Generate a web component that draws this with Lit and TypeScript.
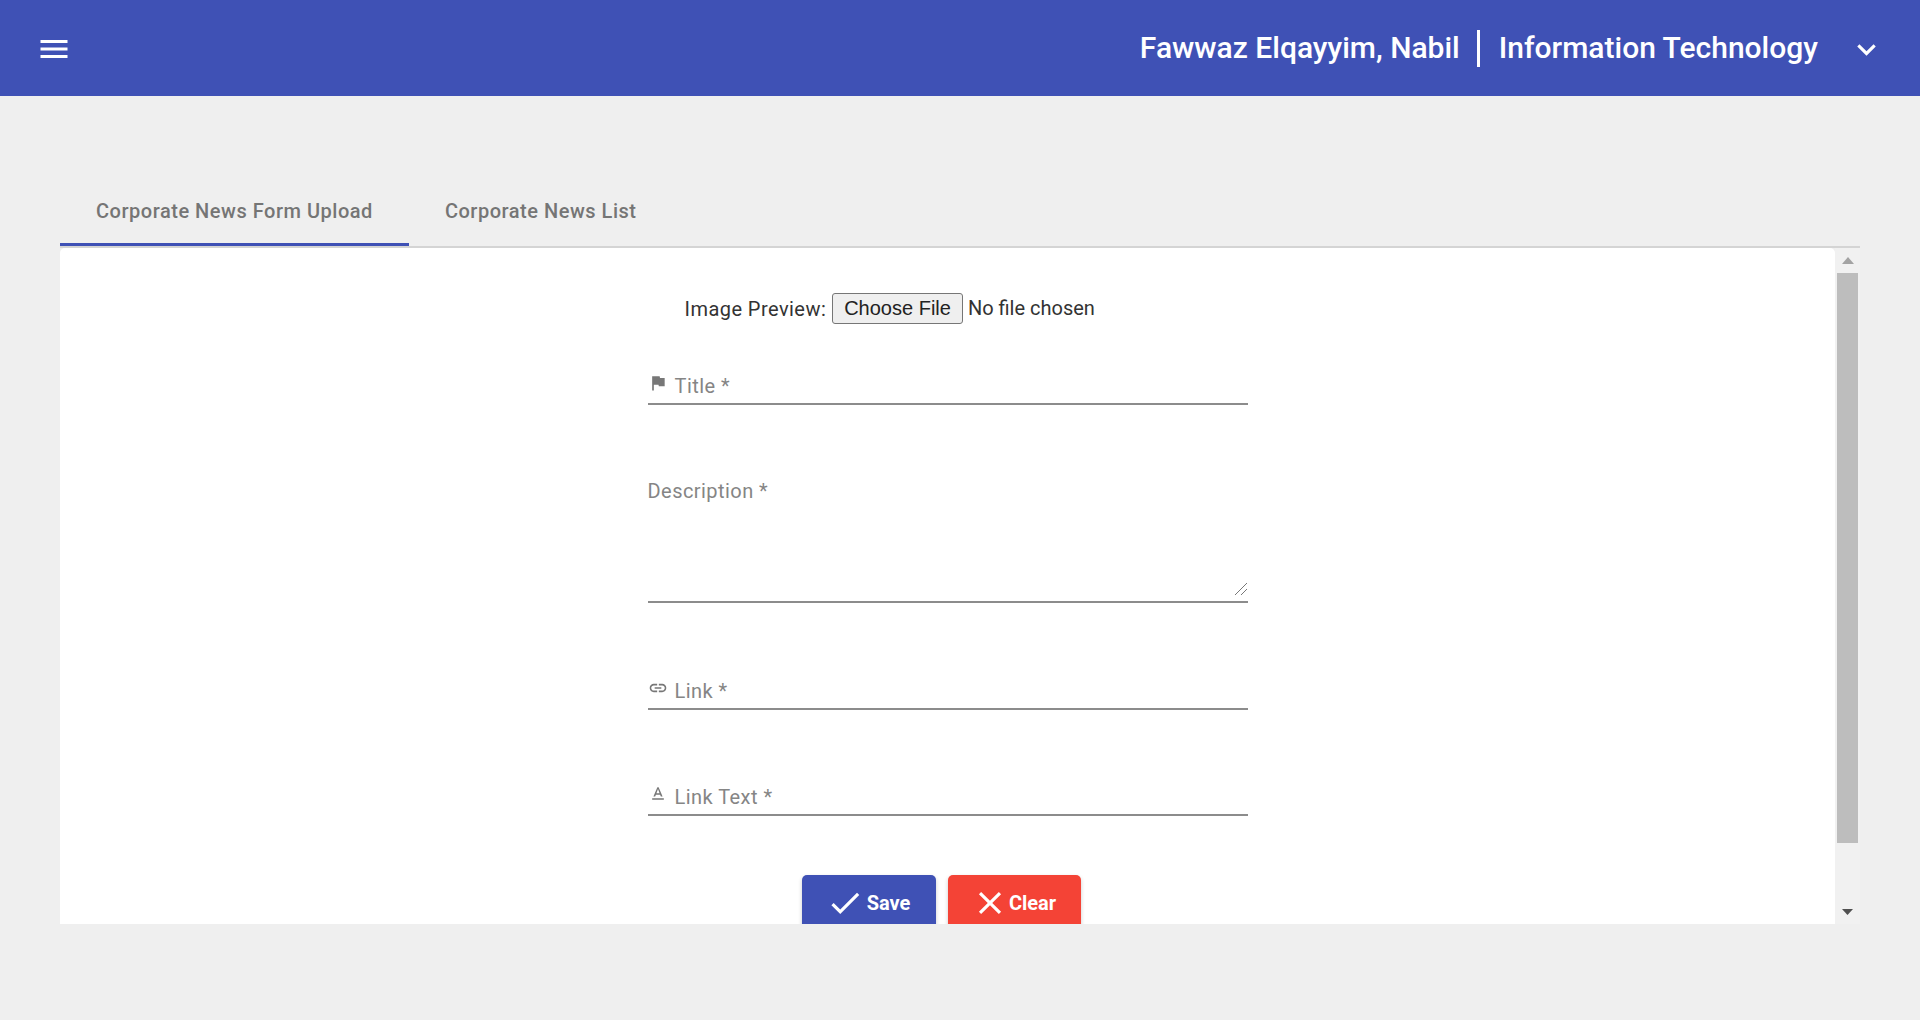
import { LitElement, html, css, svg } from "lit"
import { customElement } from "lit/decorators.js"

const icon = (d: unknown, size: number) => html`<svg class="icon" width=${size} height=${size} viewBox="0 0 24 24" fill="currentColor">${d}</svg>`

const MENU = svg`<path d="M3 18h18v-2H3v2zm0-5h18v-2H3v2zm0-7v2h18V6H3z"/>`
const CHEVRON = svg`<path d="M16.59 8.59L12 13.17 7.41 8.59 6 10l6 6 6-6z"/>`
const FLAG = svg`<path d="M14.4 6L14 4H5v17h2v-7h5.6l.4 2h7V6z"/>`
const LINK = svg`<path d="M3.9 12c0-1.71 1.39-3.1 3.1-3.1h4V7H7c-2.76 0-5 2.24-5 5s2.24 5 5 5h4v-1.9H7c-1.71 0-3.1-1.39-3.1-3.1zM8 13h8v-2H8v2zm9-6h-4v1.9h4c1.71 0 3.1 1.39 3.1 3.1s-1.39 3.1-3.1 3.1h-4V17h4c2.76 0 5-2.24 5-5s-2.24-5-5-5z"/>`
const TEXT_FORMAT = svg`<path d="M5 17v2h14v-2H5zm4.5-4.2h5l.9 2.2h2.1L12.75 4h-1.5L6.5 15h2.1l.9-2.2zM12 5.98L13.87 11h-3.74L12 5.98z"/>`
const CHECK = svg`<path d="M9 16.17L4.83 12l-1.42 1.41L9 19 21 7l-1.41-1.41z"/>`
const CLOSE = svg`<path d="M19 6.41L17.59 5 12 10.59 6.41 5 5 6.41 10.59 12 5 17.59 6.41 19 12 13.41 17.59 19 19 17.59 13.41 12z"/>`

@customElement("app-root")
export class AppRoot extends LitElement {
	static styles = css`
:host {
	display: block;
	height: 1020px;
	background: #efefef;
	font-family: Roboto, "Liberation Sans", sans-serif;
	overflow: hidden;
}
.icon {
	display: block;
	flex: none;
}

/* header */
.topbar {
	height: 96px;
	background: #3f51b5;
	color: #fff;
	display: flex;
	align-items: center;
	justify-content: space-between;
	padding: 1px 35px 0 36px;
	box-sizing: border-box;
}
.user {
	display: flex;
	align-items: center;
	font-size: 30px;
	font-weight: 500;
}
.user .name {
	margin-bottom: 2px;
}
.user .sep {
	width: 3px;
	height: 37px;
	background: #fff;
	margin: 0 19px 0 17px;
}
.user .icon {
	margin-left: 30px;
	margin-top: 1px;
}

/* tabs */
.main {
	padding: 80px 60px 0;
}
.tabs {
	display: flex;
	height: 72px;
	border-bottom: 2px solid #d4d4d4;
	box-sizing: border-box;
}
.tab {
	height: 70px;
	padding: 3px 36px 0 36px;
	box-sizing: border-box;
	font-size: 20px;
	font-weight: 500;
	letter-spacing: 0.52px;
	color: #757575;
	display: flex;
	align-items: center;
	border-bottom: 3px solid transparent;
}
.tab.active {
	border-bottom-color: #3f51b5;
}

/* panel */
.panel {
	display: flex;
	height: 676px;
}
.sheet {
	flex: 1;
	background: #fff;
	border-radius: 5px 5px 0 0;
	padding-top: 45px;
	box-sizing: border-box;
	overflow: hidden;
}
.form {
	width: 600px;
	margin: 0 auto;
}

/* scrollbar */
.scrollbar {
	flex: none;
	width: 25px;
	background: #f1f1f1;
	display: flex;
	flex-direction: column;
}
.scrollbar .step {
	flex: none;
	height: 25px;
	display: flex;
	align-items: center;
	justify-content: center;
}
.scrollbar .thumb {
	flex: none;
	height: 570px;
	margin: 0 2px;
	background: #bdbdbd;
}
.scrollbar .rest {
	flex: 1;
}

/* image row */
.preview {
	display: flex;
	align-items: center;
	height: 31px;
	padding-left: 37px;
	font-size: 20px;
	letter-spacing: 0.45px;
	color: #333;
}
.preview input {
	margin-left: 6px;
	font: 20px Roboto, sans-serif;
	letter-spacing: 0;
	color: #333;
}
.preview input::file-selector-button {
	font: 20px "Liberation Sans", Arial, sans-serif;
	height: 31px;
	padding: 0 11px;
	margin-right: 5px;
	color: #222;
	background: #efefef;
	border: 1px solid #767676;
	border-radius: 3px;
}

/* fields */
.field {
	position: relative;
	height: 38px;
	margin-top: 69px;
	border-bottom: 2px solid #8c8c8c;
	box-sizing: border-box;
}
.field.first {
	margin-top: 43px;
}
.field.area {
	height: 133px;
	margin-top: 65px;
}
.field.last {
	margin-top: 68px;
}
.field input,
.field textarea {
	display: block;
	width: 100%;
	height: 100%;
	padding: 0;
	border: 0;
	outline: 0;
	background: transparent;
	font: 20px Roboto, sans-serif;
	box-sizing: border-box;
}
.field textarea {
	resize: none;
}
.float {
	position: absolute;
	left: 0;
	top: 7px;
	display: flex;
	align-items: center;
	gap: 7px;
	font-size: 20px;
	line-height: 24px;
	letter-spacing: 0.45px;
	color: #858585;
	pointer-events: none;
}
.field.area .float {
	top: 9px;
}
.float .icon {
	color: #777;
	margin-top: -6px;
}
.grip {
	position: absolute;
	right: 1px;
	bottom: 6px;
	pointer-events: none;
}

/* buttons */
.actions {
	display: flex;
	justify-content: center;
	gap: 12px;
	margin-top: 59px;
	padding-right: 12px;
}
.btn {
	display: flex;
	align-items: center;
	justify-content: center;
	height: 56px;
	border: 0;
	border-radius: 5px;
	color: #fff;
	font: 700 20px Roboto, sans-serif;
	box-shadow: 0 2px 4px rgba(0, 0, 0, 0.2);
	padding: 0 2px 0 0;
}
.btn.save {
	width: 134px;
	gap: 3px;
	background: #3f51b5;
}
.btn.clear {
	width: 133px;
	gap: 0;
	background: #f44336;
}
`

	render() {
		return html`
		<div class="topbar">
			${icon(MENU, 36)}
			<div class="user">
				<span class="name">Fawwaz Elqayyim, Nabil</span>
				<span class="sep"></span>
				<span class="name">Information Technology</span>
				${icon(CHEVRON, 37)}
			</div>
		</div>
		<div class="main">
			<div class="tabs">
				<div class="tab active">Corporate News Form Upload</div>
				<div class="tab">Corporate News List</div>
			</div>
			<div class="panel">
				<div class="sheet">
					<div class="form">
						<div class="preview">
							<span>Image Preview:</span>
							<input type="file">
						</div>
						<div class="field first">
							<input id="title" type="text">
							<label class="float" for="title">${icon(FLAG, 20)}<span>Title *</span></label>
						</div>
						<div class="field area">
							<textarea id="desc"></textarea>
							<label class="float" for="desc"><span>Description *</span></label>
							<svg class="grip" width="12" height="12" viewBox="0 0 12 12" fill="none" stroke="#555" stroke-width="0.8">
								<path d="M0 12L12 0M6 12l6-6"/>
							</svg>
						</div>
						<div class="field">
							<input id="link" type="text">
							<label class="float" for="link">${icon(LINK, 20)}<span>Link *</span></label>
						</div>
						<div class="field last">
							<input id="linktext" type="text">
							<label class="float" for="linktext">${icon(TEXT_FORMAT, 20)}<span>Link Text *</span></label>
						</div>
						<div class="actions">
							<button class="btn save">${icon(CHECK, 38)}<span>Save</span></button>
							<button class="btn clear">${icon(CLOSE, 38)}<span>Clear</span></button>
						</div>
					</div>
				</div>
				<div class="scrollbar">
					<div class="step">
						<svg width="12" height="7" viewBox="0 0 12 7"><path d="M6 0l6 7H0z" fill="#a3a3a3"/></svg>
					</div>
					<div class="thumb"></div>
					<div class="rest"></div>
					<div class="step">
						<svg width="11" height="6" viewBox="0 0 11 6"><path d="M5.500 6L0 0h11z" fill="#505050"/></svg>
					</div>
				</div>
			</div>
		</div>
		`
	}
}
